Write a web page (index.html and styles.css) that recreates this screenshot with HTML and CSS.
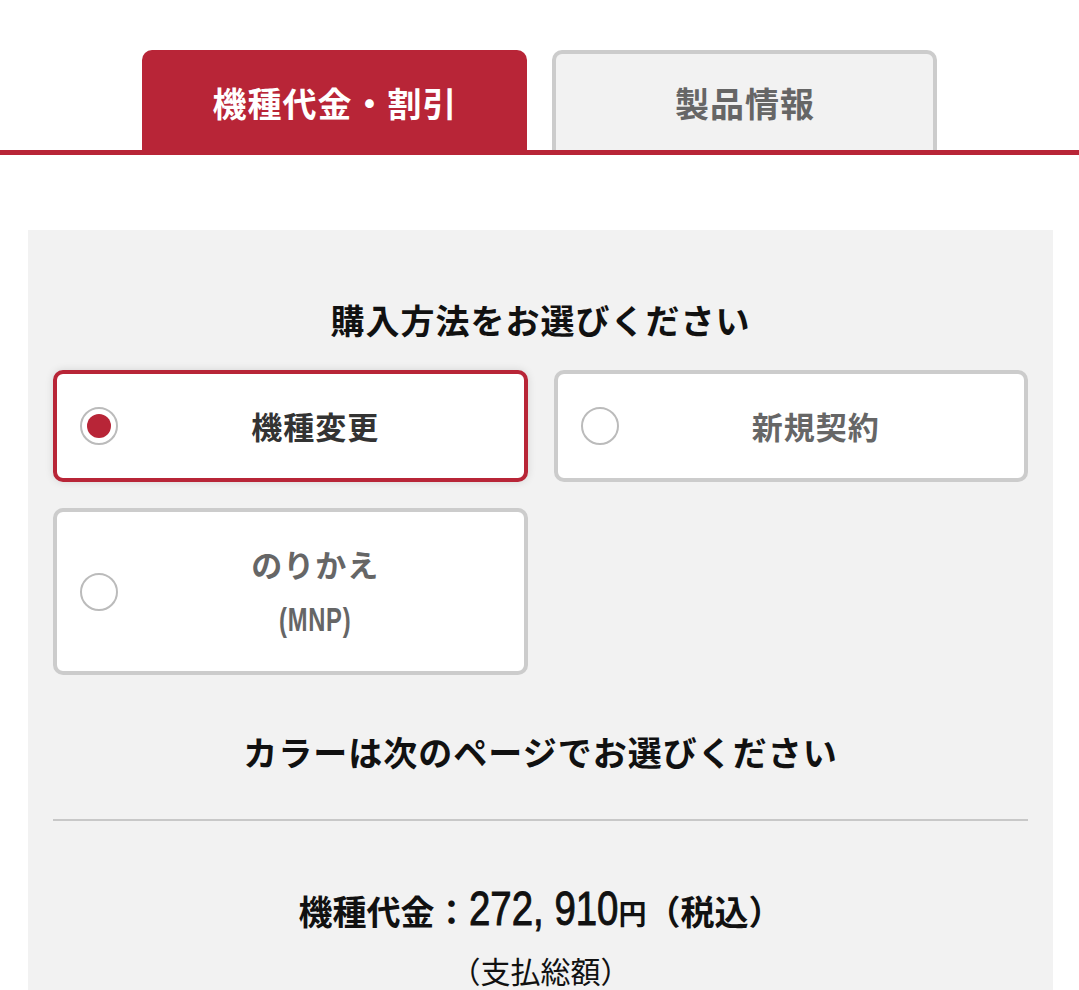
FILE: index.html
```html
<!DOCTYPE html>
<html lang="ja">
<head>
    <meta charset="UTF-8">
    <meta name="viewport" content="width=device-width, initial-scale=1.0">
    <title>機種代金・割引</title>
    <link rel="stylesheet" href="styles.css">
</head>
<body>
    <div class="tabs">
        <div class="tab active">機種代金・割引</div>
        <div class="tab">製品情報</div>
    </div>

    <div class="panel">
        <h2 class="panel-title">購入方法をお選びください</h2>

        <div class="options">
            <label class="option selected">
                <span class="radio"></span>
                <span class="option-label">機種変更</span>
            </label>
            <label class="option">
                <span class="radio"></span>
                <span class="option-label">新規契約</span>
            </label>
            <label class="option tall">
                <span class="radio"></span>
                <span class="option-label">のりかえ<br><span class="sub">(MNP)</span></span>
            </label>
        </div>

        <h2 class="panel-title color-note">カラーは次のページでお選びください</h2>

        <hr class="divider">

        <div class="price">
            <span class="price-label">機種代金：</span><span class="price-num">272, 910</span><span class="price-yen">円</span><span class="price-tax">（税込）</span>
        </div>
        <div class="price-note">（支払総額）</div>
    </div>
</body>
</html>
```

FILE: styles.css
```css
body {
    margin: 0;
    font-family: "Noto Sans CJK JP", "Noto Sans", sans-serif;
    background-color: #fff;
    color: #111;
}

.tabs {
    display: flex;
    justify-content: center;
    gap: 25px;
    padding-top: 50px;
    border-bottom: 5px solid #b82537;
}

.tab {
    box-sizing: border-box;
    width: 385px;
    height: 100px;
    display: flex;
    align-items: center;
    justify-content: center;
    padding-left: 1px;
    font-size: 34px;
    letter-spacing: 1px;
    font-weight: bold;
    color: #666;
    background-color: #f2f2f2;
    border: 4px solid #cccccc;
    border-bottom: none;
    border-radius: 10px 10px 0 0;
}

.tab.active {
    background-color: #b82537;
    border-color: #b82537;
    color: #fff;
}

.panel {
    margin: 75px 26px 0 28px;
    padding: 66px 25px 40px;
    background-color: #f2f2f2;
}

.panel-title {
    margin: 0;
    text-align: center;
    font-size: 34px;
    letter-spacing: 1px;
    line-height: 48px;
    font-weight: bold;
    color: #111;
}

.options {
    display: grid;
    grid-template-columns: 1fr 1fr;
    gap: 26px;
    margin-top: 26px;
}

.option {
    box-sizing: border-box;
    height: 112px;
    display: flex;
    align-items: center;
    padding: 0 11px 0 23px;
    background-color: #fff;
    border: 4px solid #cccccc;
    border-radius: 10px;
    cursor: pointer;
}

.option.selected {
    border-color: #b82537;
    box-shadow: 0 0 8px rgba(0, 0, 0, 0.12);
}

.option.tall {
    height: 167px;
}

.radio {
    box-sizing: border-box;
    width: 38px;
    height: 38px;
    flex-shrink: 0;
    border: 2px solid #bbbbbb;
    border-radius: 50%;
    background-color: #fff;
    display: flex;
    align-items: center;
    justify-content: center;
}

.option.selected .radio::after {
    content: "";
    width: 24px;
    height: 24px;
    border-radius: 50%;
    background-color: #b82537;
}

.option-label {
    flex: 1;
    text-align: center;
    font-size: 31px;
    letter-spacing: 1px;
    font-weight: bold;
    line-height: 54px;
    color: #666;
}

.option.selected .option-label {
    color: #333;
}

.sub {
    display: inline-block;
    font-family: "Liberation Sans", sans-serif;
    font-size: 33px;
    letter-spacing: 1px;
    transform: scaleX(0.72);
}

.color-note {
    margin-top: 53px;
}

.divider {
    margin: 43px 0 0;
    border: none;
    border-top: 2px solid #c8c8c8;
}

.price {
    margin-top: 58px;
    text-align: center;
    font-weight: bold;
    line-height: 60px;
}

.price-label {
    font-size: 34px;
}

.price-num {
    display: inline-block;
    margin-right: -37px;
    font-family: "Liberation Sans", sans-serif;
    font-size: 48px;
    font-weight: normal;
    -webkit-text-stroke: 1px #111;
    transform: scaleX(0.8);
    transform-origin: left center;
}

.price-yen {
    font-size: 28px;
}

.price-tax {
    font-size: 34px;
}

.price-note {
    text-align: center;
    font-size: 30px;
    line-height: 45px;
}
```
